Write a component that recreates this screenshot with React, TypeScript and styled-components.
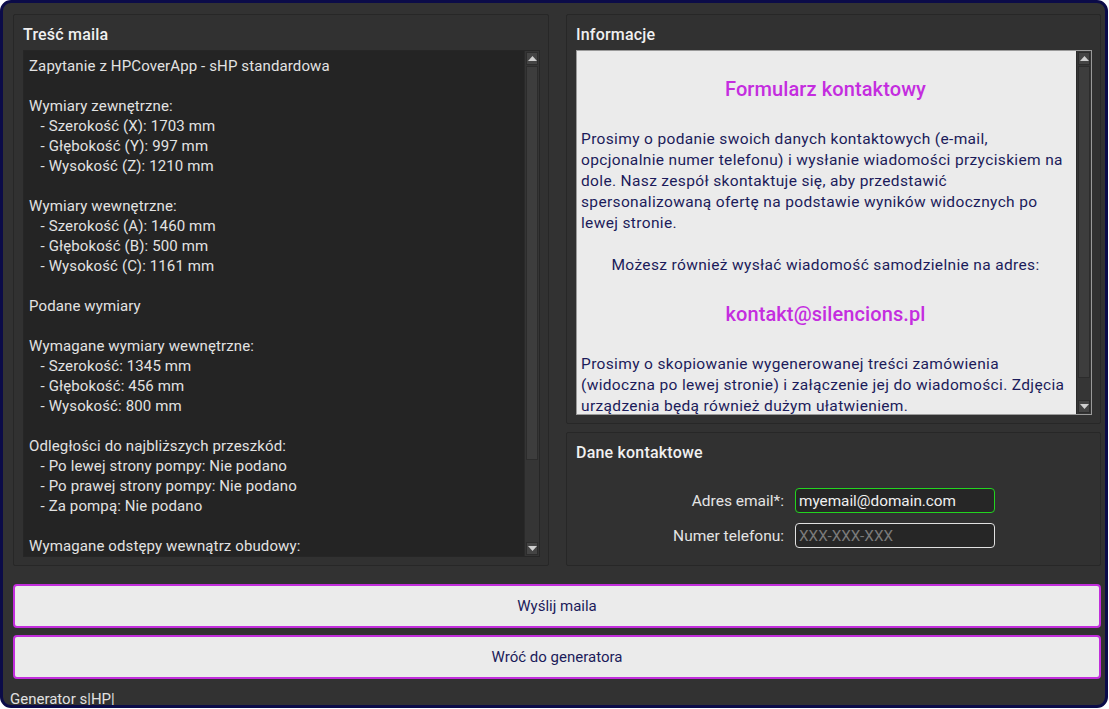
import React from "react";
import styled, { createGlobalStyle } from "styled-components";

const Global = createGlobalStyle`
  html, body { margin: 0; padding: 0; background: #ffffff; }
  body { font-family: Roboto, "Noto Sans", sans-serif; }
  * { box-sizing: border-box; }
`;

const Window = styled.div`
  width: 1108px;
  height: 708px;
  border: 3px solid #0b0b48;
  border-radius: 11px;
  background: #323232;
  padding: 11px 0 0 10px;
  display: flex;
  flex-direction: column;
  overflow: hidden;
`;

const Content = styled.div`
  width: 1088px;
  display: flex;
  flex-direction: column;
`;

const Columns = styled.div`
  display: grid;
  grid-template-columns: 536px 535px;
  column-gap: 17px;
  height: 552px;
`;

const RightColumn = styled.div`
  display: flex;
  flex-direction: column;
  gap: 8px;
  min-height: 0;
`;

const Panel = styled.section<{ $grow?: boolean }>`
  background: #313131;
  border: 1px solid #272727;
  border-radius: 2px;
  padding: 11px 8px 8px 9px;
  display: flex;
  flex-direction: column;
  min-height: 0;
  ${(p) => (p.$grow ? "flex: 1;" : "")}
`;

const PanelTitle = styled.h2`
  margin: 0 0 6px 0;
  font-size: 16px;
  font-weight: 500;
  letter-spacing: 0.2px;
  color: #f0f0f0;
  height: 18px;
  line-height: 18px;
`;

const ScrollBox = styled.div<{ $light?: boolean }>`
  flex: 1;
  min-height: 0;
  display: flex;
  background: ${(p) => (p.$light ? "#ebebeb" : "#242424")};
  border: 1px solid ${(p) => (p.$light ? "#9a9a9a" : "#262626")};
`;

const ScrollContent = styled.div`
  flex: 1;
  overflow: hidden;
  min-width: 0;
`;

const MailText = styled.pre`
  margin: 0;
  padding: 5px 4px 0 5px;
  font-family: Roboto, "Noto Sans", sans-serif;
  font-size: 15px;
  letter-spacing: 0.12px;
  line-height: 20px;
  color: #e2e2e2;
  white-space: pre;
`;

const Bar = styled.div`
  width: 15px;
  display: flex;
  flex-direction: column;
  background: #353535;
  border-left: 1px solid #2a2a2a;
  padding: 1px 1px;
  gap: 1px;
`;

const BarButton = styled.div`
  height: 13px;
  background: #444444;
  border: 1px solid #2c2c2c;
  display: flex;
  align-items: center;
  justify-content: center;
`;

const Track = styled.div`
  flex: 1;
  display: flex;
  flex-direction: column;
  background: #353535;
`;

const Thumb = styled.div`
  background: #3d3d3d;
  border: 1px solid #2c2c2c;
`;

const Arrow = ({ up }: { up?: boolean }) => (
  <svg width="9" height="5" viewBox="0 0 9 5">
    <polygon points={up ? "0,5 9,5 4.5,0" : "0,0 9,0 4.5,5"} fill="#cfcfcf" />
  </svg>
);

const ScrollBar = ({ thumb }: { thumb: number }) => (
  <Bar>
    <BarButton>
      <Arrow up />
    </BarButton>
    <Track>
      <Thumb style={{ height: `${thumb}px` }} />
    </Track>
    <BarButton>
      <Arrow />
    </BarButton>
  </Bar>
);

const Info = styled.div`
  padding: 21px 6px 0 4px;
  color: #1b1b5a;
  font-size: 15.5px;
  letter-spacing: 0.35px;
  line-height: 21px;
  white-space: nowrap;
`;

const InfoHeading = styled.div`
  color: #c42ddf;
  font-size: 20px;
  font-weight: 500;
  letter-spacing: 0.1px;
  text-align: center;
  line-height: 34px;
  margin-bottom: 23px;
`;

const InfoPara = styled.p<{ $center?: boolean }>`
  margin: 0 0 21px 0;
  ${(p) => (p.$center ? "text-align: center;" : "")}
`;

const Form = styled.div`
  display: grid;
  grid-template-columns: auto 200px;
  justify-content: end;
  column-gap: 11px;
  row-gap: 10px;
  align-items: center;
  margin-top: 20px;
  padding-right: 97px;
  padding-bottom: 9px;
`;

const Label = styled.label`
  text-align: right;
  color: #e4e4e4;
  font-size: 15.5px;
`;

const Input = styled.input<{ $valid?: boolean }>`
  height: 25px;
  width: 200px;
  border-radius: 4px;
  border: 1px solid ${(p) => (p.$valid ? "#22d41f" : "#e0e0e0")};
  background: #262626;
  color: #f0f0f0;
  font-family: Roboto, "Noto Sans", sans-serif;
  font-size: 15.3px;
  padding: 0 3px;
  outline: none;
  &::placeholder { color: #7a7a7a; }
`;

const Buttons = styled.div`
  margin-top: 18px;
  display: flex;
  flex-direction: column;
  gap: 7px;
`;

const ActionButton = styled.button`
  height: 44px;
  width: 1088px;
  background: #ebebeb;
  border: 2px solid #c22ddc;
  border-radius: 4px;
  color: #1b1b5a;
  font-family: Roboto, "Noto Sans", sans-serif;
  font-size: 15px;
  cursor: pointer;
`;

const Footer = styled.div`
  margin-top: 11px;
  margin-left: -3px;
  color: #e0e0e0;
  font-size: 15px;
  line-height: 18px;
`;

const mail = `Zapytanie z HPCoverApp - sHP standardowa

Wymiary zewnętrzne:
   - Szerokość (X): 1703 mm
   - Głębokość (Y): 997 mm
   - Wysokość (Z): 1210 mm

Wymiary wewnętrzne:
   - Szerokość (A): 1460 mm
   - Głębokość (B): 500 mm
   - Wysokość (C): 1161 mm

Podane wymiary

Wymagane wymiary wewnętrzne:
   - Szerokość: 1345 mm
   - Głębokość: 456 mm
   - Wysokość: 800 mm

Odległości do najbliższych przeszkód:
   - Po lewej strony pompy: Nie podano
   - Po prawej strony pompy: Nie podano
   - Za pompą: Nie podano

Wymagane odstępy wewnątrz obudowy:`;

export default function App() {
  return (
    <>
      <Global />
      <Window>
        <Content>
          <Columns>
            <Panel>
              <PanelTitle>Treść maila</PanelTitle>
              <ScrollBox>
                <ScrollContent>
                  <MailText>{mail}</MailText>
                </ScrollContent>
                <ScrollBar thumb={394} />
              </ScrollBox>
            </Panel>
            <RightColumn>
              <Panel $grow>
                <PanelTitle>Informacje</PanelTitle>
                <ScrollBox $light>
                  <ScrollContent>
                    <Info>
                      <InfoHeading>Formularz kontaktowy</InfoHeading>
                      <InfoPara>
                        Prosimy o podanie swoich danych kontaktowych (e-mail,
                        <br />
                        opcjonalnie numer telefonu) i wysłanie wiadomości przyciskiem na
                        <br />
                        dole. Nasz zespół skontaktuje się, aby przedstawić
                        <br />
                        spersonalizowaną ofertę na podstawie wyników widocznych po
                        <br />
                        lewej stronie.
                      </InfoPara>
                      <InfoPara $center>Możesz również wysłać wiadomość samodzielnie na adres:</InfoPara>
                      <InfoHeading>kontakt@silencions.pl</InfoHeading>
                      <InfoPara>
                        Prosimy o skopiowanie wygenerowanej treści zamówienia
                        <br />
                        (widoczna po lewej stronie) i załączenie jej do wiadomości. Zdjęcia
                        <br />
                        urządzenia będą również dużym ułatwieniem.
                      </InfoPara>
                    </Info>
                  </ScrollContent>
                  <ScrollBar thumb={312} />
                </ScrollBox>
              </Panel>
              <Panel>
                <PanelTitle>Dane kontaktowe</PanelTitle>
                <Form>
                  <Label>Adres email*:</Label>
                  <Input $valid defaultValue="myemail@domain.com" />
                  <Label>Numer telefonu:</Label>
                  <Input placeholder="XXX-XXX-XXX" />
                </Form>
              </Panel>
            </RightColumn>
          </Columns>
          <Buttons>
            <ActionButton>Wyślij maila</ActionButton>
            <ActionButton>Wróć do generatora</ActionButton>
          </Buttons>
          <Footer>Generator s|HP|</Footer>
        </Content>
      </Window>
    </>
  );
}
